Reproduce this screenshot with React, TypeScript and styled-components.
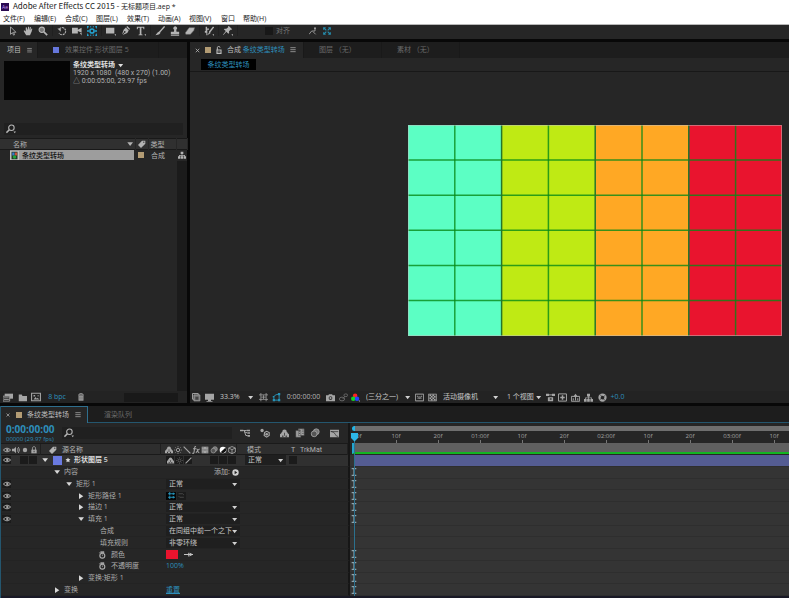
import React from "react";
import styled, { createGlobalStyle, css } from "styled-components";

const blue = "#2d8ebb";

const Global = createGlobalStyle`
  *, *::before, *::after { box-sizing: border-box; }
  html, body { margin: 0; height: 100%; background: #0a0a0a; }
  #root { height: 100vh; }
  body, button, input, select, table {
    font-family: "Open Sans", "Noto Sans CJK SC", sans-serif;
    font-size: 7px;
    line-height: 10px;
    color: #b2b2b2;
  }
  button, input, select { border: 0; margin: 0; padding: 0; background: none; outline: 0; }
  h1, p { margin: 0; font-weight: 400; }
  svg { display: block; flex: none; }
`;

/* ---------- icons ---------- */

const line = { fill: "none", stroke: "currentColor", strokeWidth: 1.3 };

const art: Record<string, React.ReactNode> = {
  arrow: <path d="M3 1v9l2.3-2 1.4 3 1.2-.6L6.6 7.500H9.500z" {...line} strokeWidth={1} />,
  hand: <path d="M3.300 6.500 1.500 5 .800 6l3 5h4.600l2-4.500.8-3.200-1-.3-1.100 2.500.3-4.300H8.300L7.600 5 7.200.8H6L5.800 5 4.400 1.500l-1.100.4z" fill="currentColor" />,
  zoom: <><circle cx="4.500" cy="4.500" r="3.200" fill="#777" stroke="currentColor" strokeWidth="1.300" /><path d="m7 7 4 4" {...line} strokeWidth={2} /></>,
  rotate: <><path d="M3 3.200a4.300 4.300 0 1 1-.6 5.200" {...line} strokeDasharray="2.500 .8" /><path d="M.5 3h4v4z" fill="currentColor" /></>,
  camera: <path d="M0 2h7v2.500L11.500 2v6L7 6v3H0zM9.500 8.500h2v3z" fill="currentColor" />,
  anchor: <><circle cx="6" cy="6" r="2.500" {...line} strokeWidth={1.800} /><path d="M0 3V1h2M4 1h1M7 1h1M10 1h2v2M12 9v2h-2M8 11H7M5 11H4M2 11H0V9M0 6h2.500M9.500 6H12" {...line} strokeWidth={1.800} /></>,
  rect: <path d="M0 2h10v7H0zM10 10h2v2z" fill="currentColor" />,
  pen: <><path d="m7.500 0 3.500 3.500-1.200 1-3.400-3.400zM5.800 1.800l3.500 3.500-1.800 3-5.500 2.400L4.300 8a1 1 0 1 0-.7-.6L1.300 10l1.900-5.500z" fill="currentColor" /></>,
  text: <path d="M1 1h9v3H9L8.500 2h-2v8l1.500.5v.5H3v-.5L4.500 10V2h-2L2 4H1zM10 10h2v2z" fill="currentColor" />,
  brush: <><path d="M11.500.5 5.300 7.500" {...line} strokeWidth={1.600} /><path d="M5 6.500c1 .5 1.500 1.200 1.500 2C5 11 2 11 .5 11c1.500-1.300 2-3.500 4.500-4.500z" fill="currentColor" /></>,
  stamp: <path d="M4.700 7 5 4.500a2.200 2.200 0 1 1 2.500 0L7.800 7H11v3H1V7zM1 10.600h10v1H1z" fill="currentColor" />,
  eraser: <path d="m.5 8 4.500-6h6.500L10.500 5.500l-4 4.500h-5.500z" fill="currentColor" stroke="#777" strokeWidth=".6" />,
  roto: <><path d="m11.500 1-5 6.500" {...line} strokeWidth={1.700} /><path d="M6.500 7 8 8.500 4 11zM2 1h1.700v2H6v1.500H4V11H2.800V8H1V6h1zM10 10h2v2z" fill="currentColor" /></>,
  pin: <path d="m7 0 4 4-1 .6-.8-.2-2 2 .2 2-1 .8L4 6.800.500 10.700 0 10.400 3.300 6 1 4l.8-.8 2.200.1L6.200 1.500 6 .7zM10 10h2v2z" fill="currentColor" />,
  snapA: <><path d="M0 11 4 6h5V2M6 7l4 4" {...line} /><circle cx="9" cy="2" r="1.500" fill="currentColor" /></>,
  snapB: <path d="M1 4V1h3M8 1h3v3M11 8v3H8M4 11H1V8M2 2l3 3M10 2 7 5M2 10l3-3M10 10 7 7" {...line} strokeWidth={1.600} />,
  search: <><circle cx="6.500" cy="4.500" r="3.300" {...line} /><path d="M4 7 .5 10.500" {...line} strokeWidth={1.800} /><path d="M9 9h3l-1.500 2z" fill="currentColor" /></>,
  menu: <path d="M2 2.500h8M2 5.500h8M2 8.500h8" {...line} strokeWidth={1} />,
  close: <path d="m3 3 6 6m0-6L3 9" {...line} />,
  lock: <><path d="M2 5.500h8V11H2z" fill="currentColor" /><path d="M3.700 6V3.200c0-3 4.600-3 4.600 0V6" {...line} /><path d="M5.500 7.200h1.200v2H5.500z" fill="#262626" /></>,
  unlock: <><path d="M3 6h6v5H3z" {...line} strokeWidth={1.700} /><path d="M3.500 6V2.500c0-2.500 4-2.500 4 0" {...line} strokeWidth={1.500} /><path d="M5.500 7.500h1v2h-1z" fill="currentColor" /></>,
  tag: <><path d="M6 1h5v4.500L4.500 12 0 7.500z" fill="currentColor" /><circle cx="8.700" cy="3.300" r=".9" fill="#262626" /></>,
  down: <path d="M2 3.500h8.500L6.200 9z" fill="currentColor" />,
  right: <path d="M3 2v8.500L9.500 6.200z" fill="currentColor" />,
  comp: <><path d="M0 0h12v12H0z" fill="#c0c0c0" /><path d="M2 1h8v10H2z" fill="#203a28" /><path d="M3 2h3v4H3z" fill="#397cd0" /><path d="M6.500 2h3v4h-3z" fill="#c85038" /><circle cx="6" cy="8" r="2.300" fill="#23a33a" /></>,
  flow: <path d="M4 1h4v3.500H4zM0 8h3.500v3.500H0zM4.200 8h3.500v3.500H4.200zM8.500 8H12v3.500H8.500zM5.500 4h1v4h-1zM1.500 6h9v2.500h-1V7h-7v1.500h-1z" fill="currentColor" />,
  interpret: <><path d="M2 2h10v6H2z" fill="currentColor" /><path d="M0 5h8v6H0z" fill="#262626" stroke="currentColor" /><path d="M1 7h6M1 9h6" {...line} strokeWidth={1} /></>,
  folder: <path d="M1 2h4l1 2h6v7H1z" fill="currentColor" />,
  newcomp: <><path d="M.7 1.500h10.600v9H.700z" {...line} /><path d="M3 3.500h2v2H3zM8 3.500h1v2H8zM3 9l2.500-3L7 8l1-1 2 2z" fill="currentColor" /></>,
  trash: <><path d="M1.500 3h9M4 2.500V1h4v1.500" {...line} /><path d="M2.300 4h7.400v7.500H2.300z" fill="currentColor" /><path d="M4.500 5v5M7.500 5v5" stroke="#333" strokeWidth=".8" /></>,
  layers: <><path d="M.7.7h7.600v7.600H.700z" {...line} /><path d="M2.500 2.500h8v8h-8z" fill="#777" stroke="currentColor" /><path d="M4.500 5h4v4h-4z" fill="#444" /></>,
  monitor: <path d="M0 1h12v8H8v1.500h2v1H2v-1h2V9H0z" fill="currentColor" />,
  region: <path d="M0 2.500h12M0 8.500h12M2.500 0v11M9.500 0v11M6 3v5M3 5.500h6" {...line} strokeWidth={1} />,
  mask: <><path d="M2.500 9.500V6q0-4 7-4.500v8z" {...line} /><path d="M1 8h3v3H1zM8 0h3v3H8zM8 8h3v3H8zM1 4h2v2H1z" fill="currentColor" /></>,
  photo: <><path d="M0 3h3l1-1.500h4L9 3h3v8H0z" fill="currentColor" /><circle cx="6" cy="6.700" r="2.500" fill="#333" /><circle cx="6" cy="6.700" r="1.300" fill="currentColor" /></>,
  link: <><ellipse cx="4" cy="8" rx="3.500" ry="2.500" {...line} /><ellipse cx="9" cy="3" rx="2.500" ry="1.800" {...line} /><path d="m5 8 3-4" {...line} /></>,
  rgb: <><circle cx="5.500" cy="3.500" r="3" fill="#f22" /><circle cx="3" cy="7.500" r="3" fill="#17d326" /><circle cx="8" cy="7.500" r="3" fill="#2545ff" /><path d="M10 10h2v2z" fill="currentColor" /></>,
  fast: <><path d="M.5 1.500h11v9H.500z" {...line} /><path d="M3 4h1v1H3zM8 4h1v1H8zM3 7h6M5 5h2v2H5z" {...line} strokeWidth={.8} /></>,
  checker: <><path d="M.5 1.500h11v9H.500z" fill="#444" stroke="currentColor" /><path d="M2 2h2v2H2zM6 2h2v2H6zM4 4h2v2H4zM8 4h2v2H8zM2 6h2v2H2zM6 6h2v2H6zM4 8h2v2H4zM8 8h2v2H8z" fill="currentColor" /></>,
  pixel: <><path d="M0 1h4v3H0zM8 1h4v3H8zM2.500 5.500h7V11h-7z" fill="currentColor" /><path d="M4 2.500h4" {...line} /><path d="M5 7h2.500v2H5z" fill="#333" /></>,
  fastprev: <><path d="M.7 1.200h10.600v9.600H.700z" {...line} /><path d="M6 3v6M3 6h6" {...line} strokeWidth={2} /></>,
  timeline: <><path d="M.5 4.500h11v6.500H.500zM3 7v3M6 5v5M9 7v3" {...line} strokeWidth={1.300} /><path d="M3 5h6L6 1z" fill="currentColor" /></>,
  aperture: <><circle cx="6" cy="6" r="4" fill="none" stroke="currentColor" strokeWidth="3" /><path d="m2 2 3 2M10 2 8 5M10 10 7 8M2 10l2-3" stroke="#333" strokeWidth=".9" /></>,
  miniflow: <><path d="M0 3h4M4 3h4M5 3l2 6h2M5 4.500 9 6" {...line} strokeWidth={1.200} /><path d="M0 2h4v2H0zM8 2h4v2H8zM9 5h3v2H9zM9 8.500h3v2H9z" fill="currentColor" /></>,
  draft: <><circle cx="2.500" cy="3" r="2" fill="currentColor" /><path d="M5.500 5.500 8 4l3 1.500V9l-3 2-3-2z" {...line} strokeWidth={1.400} /><circle cx="8" cy="7.500" r="1.600" fill="currentColor" /></>,
  shy: <><path d="M0 11V7q2-1 2.500-3h7Q10 6 12 7v4z" fill="currentColor" /><circle cx="6" cy="3.800" r="3" fill="currentColor" /><path d="M3 8.500h1.500V11H3zM7.500 8.500H9V11H7.500zM5.500 5h1v4h-1z" fill="#333" /></>,
  film: <><path d="M1 3h6v8H1zM4 1h7v8H4z" fill="currentColor" stroke="#444" strokeWidth=".6" /><path d="M5.500 2v6M9.500 2v6" stroke="#262626" strokeDasharray="1 1" /></>,
  frames: <><path d="M1 1h10v10H1z" fill="currentColor" /><path d="M3 2v8M9 2v8" stroke="#333" strokeDasharray="1.300 1" /><path d="M4.500 5.500h3v1h-3z" fill="#333" /></>,
  blur: <><circle cx="7.500" cy="4.500" r="3.500" fill="#777" stroke="currentColor" /><circle cx="5" cy="7" r="3.500" fill="#555" stroke="currentColor" /></>,
  graph: <><path d="M0 1h12v10H0z" fill="currentColor" /><path d="M1 3.500h10M1 3q5 1 6 4t4 3" stroke="#333" fill="none" /></>,
  eye: <><path d="M.5 6Q6 .5 11.500 6 6 11.500.500 6z" {...line} strokeWidth={1.500} /><circle cx="6.500" cy="6" r="1.800" fill="currentColor" /></>,
  speaker: <><path d="M0 4h3l3-3v10L3 8H0z" fill="currentColor" /><path d="M8 3.500q2 2.500 0 5M9.500 1.500q3.500 4.500 0 9" {...line} /></>,
  dot: <circle cx="6" cy="6" r="3.300" fill="currentColor" />,
  sun: <><circle cx="6" cy="6" r="2.500" {...line} /><path d="M6 0v2M6 10v2M0 6h2M10 6h2M2 2l1 1M9 9l1 1M10 2 9 3M3 9l-1 1" {...line} strokeWidth={1} /></>,
  slash: <path d="m1 1 10 10" {...line} strokeWidth={1.700} />,
  quality: <path d="M1 11 11 1" {...line} strokeWidth={1.800} />,
  fx: <path d="M6 .8Q4.200.3 4 3L3 9.500Q2.500 11.500.500 11M1.500 4H6M6.500 4.500Q8 4 8.500 7t2.500 3M11.500 4.500Q9 5 6 10" {...line} strokeWidth={1.600} />,
  half: <><circle cx="6" cy="6" r="5" fill="#fff" /><path d="M9.500 2.500a5 5 0 0 1-7 7z" fill="#111" /></>,
  cube: <path d="M6 .8 11 3v6l-5 2.500L1 9V3zM1 3l5 2.500L11 3M6 5.500v6" {...line} />,
  star: <path d="m6 1 1.500 3L11 4.500 8.500 7l.7 3.700L6 9l-3.200 1.700L3.500 7 1 4.500 4.500 4z" fill="currentColor" />,
  add: <><circle cx="6" cy="6" r="5.500" fill="#d0d0d0" /><path d="M4.500 3v6L9 6z" fill="#222" /></>,
  watch: <><circle cx="6.500" cy="7" r="3.700" {...line} strokeWidth={1.700} /><path d="M4 1h5v1.500H4zM2 2l1 2" stroke="currentColor" fill="currentColor" /><path d="M6.500 5v2h1" {...line} strokeWidth={1} /></>,
  path: <path d="M0 3h12M0 9h12M3 0v6M3 7v5M9 1v4M9 7v4" {...line} strokeWidth={1.500} />,
  pathOff: <path d="M1 3h7l2 2M10 9H3L1 7" {...line} />,
  dropper: <path d="M0 6h12M6.500 3.500v5M9 4v4" {...line} strokeWidth={1.600} />,
  beam: <path d="M2.500 1h7M2.500 11h7M6 1v10" {...line} strokeWidth={1.800} />,
};

const Icon = ({ name, size = 9 }: { name: string; size?: number }) => (
  <svg width={size} height={size} viewBox="0 0 12 12" aria-hidden="true">{art[name]}</svg>
);

/* ---------- shared parts ---------- */

const Shell = styled.div`
  height: 100%;
  display: grid;
  grid-template-rows: auto auto auto minmax(0, 361fr) minmax(0, 195fr);
  background: #080808;
  overflow: hidden;
`;

const IconButton = styled.button<{ $w?: number; $tone?: string }>`
  width: ${(p) => p.$w ?? 13}px;
  height: 11px;
  flex: none;
  display: flex;
  align-items: center;
  justify-content: center;
  color: ${(p) => p.$tone ?? "#a5a5a5"};
`;

const Swatch = styled.span<{ $c: string; $w?: number; $h?: number }>`
  width: ${(p) => p.$w ?? 6}px;
  height: ${(p) => p.$h ?? 6}px;
  background: ${(p) => p.$c};
  flex: none;
`;

const TabBar = styled.div`
  display: flex;
  height: 16px;
  background: #1d1d1d;
`;

const Tab = styled.button<{ $on?: boolean; $w: number; $pad?: number; $gap?: number }>`
  width: ${(p) => p.$w}px;
  flex: none;
  display: flex;
  align-items: center;
  gap: ${(p) => p.$gap ?? 5}px;
  padding-left: ${(p) => p.$pad ?? 5}px;
  background: ${(p) => (p.$on ? "#262626" : "#1d1d1d")};
  color: ${(p) => (p.$on ? "#bcbcbc" : "#6a6a6a")};
  border-right: 1px solid #191919;
  white-space: nowrap;
`;

const Blue = styled.span`color: ${blue};`;

/* ---------- window header ---------- */

const TitleBar = styled.header`
  display: flex;
  align-items: center;
  gap: 4px;
  height: 13px;
  padding-left: 1px;
  background: #fff;
`;
const Logo = styled.span`
  width: 8px;
  height: 8px;
  background: #2a0a52;
  color: #c79cf2;
  font-size: 5px;
  line-height: 8px;
  text-align: center;
`;
const Title = styled.h1`
  font-family: "Noto Sans CJK SC", sans-serif;
  font-size: 8px;
  line-height: 12px;
  color: #222;
`;
const FileName = styled.span`
  font-family: "Open Sans", "Noto Sans CJK SC", sans-serif;
  font-size: 7px;
`;
const MenuBar = styled.nav`
  display: flex;
  height: 12px;
  padding-left: 3px;
  background: #fff;
  border-bottom: 1px solid #b8b8b8;
`;
const MenuItem = styled.button<{ $w?: number }>`
  width: ${(p) => p.$w ?? 31}px;
  color: #222;
  text-align: left;
  white-space: nowrap;
`;

const Tools = styled.div`
  display: flex;
  align-items: center;
  height: 17px;
  padding: 0 0 3px 5px;
  background: #262626;
  border-bottom: 3px solid #080808;
`;
const ToolGroup = styled.div`
  display: flex;
  padding-right: 2px;
  margin-right: 1px;
  border-right: 1px solid #202020;
`;
const SnapLabel = styled.label`
  display: flex;
  align-items: center;
  gap: 3px;
  margin: 0 16px 0 26px;
  color: #777;
`;
const DarkCheck = styled.input`
  appearance: none;
  width: 8px;
  height: 8px;
  background: #181818;
`;

/* ---------- project panel ---------- */

const Workspace = styled.main`
  display: grid;
  grid-template-columns: 187px minmax(0, 1fr);
  gap: 3px;
  min-height: 0;
`;
const Panel = styled.section`
  display: flex;
  flex-direction: column;
  min-width: 0;
  min-height: 0;
  background: #262626;
`;
const AssetInfo = styled.div`
  display: flex;
  gap: 3px;
  height: 65px;
  padding: 3px 4px;
  font-family: Roboto, "Noto Sans CJK SC", sans-serif;
  line-height: 8px;
  white-space: pre;
`;
const Thumb = styled.div`
  width: 66px;
  height: 39px;
  background: #050505;
`;
const AssetName = styled.p`
  display: flex;
  align-items: center;
  gap: 2px;
  color: #e0e0e0;
  font-weight: 600;
`;
const SearchBox = styled.label<{ $w?: number }>`
  display: flex;
  align-items: center;
  height: 12px;
  ${(p) => (p.$w ? css`width: ${p.$w}px;` : css`margin: 0 4px;`)}
  padding-left: 2px;
  background: #202020;
  color: #b5b5b5;
`;
const SearchInput = styled.input`
  flex: 1;
  min-width: 0;
  height: 10px;
`;
const Assets = styled.table`
  width: 187px;
  margin-top: 3px;
  table-layout: fixed;
  border-collapse: collapse;
  th, td { padding: 0; height: 11px; font-weight: 400; text-align: left; line-height: 9px; }
  thead tr { background: #303030; border-bottom: 1px solid #191919; border-top: 1px solid #191919; }
  th { border-right: 1px solid #262626; }
`;
const Spread = styled.span<{ $pad?: number }>`
  display: flex;
  align-items: center;
  justify-content: space-between;
  padding: 0 1px 0 ${(p) => p.$pad ?? 0}px;
`;
const Picked = styled.span`
  display: flex;
  align-items: center;
  margin: 0 1px 0 10px;
  gap: 3px;
  height: 10px;
  background: #9d9d9d;
  color: #101010;
  font-weight: 500;
`;
const ScrollLane = styled.div`
  flex: 1;
  align-self: flex-end;
  width: 10px;
  background: #1b1b1b;
`;
const PanelFoot = styled.footer`
  display: flex;
  align-items: center;
  height: 12px;
  background: #232323;
  white-space: nowrap;
`;
const FootScroll = styled.span`
  height: 9px;
  width: 54px;
  margin-left: 34px;
  background: #191919;
`;
const Depth = styled.button`
  width: 28px;
  color: ${blue};
`;

/* ---------- composition panel ---------- */

const Crumbs = styled.nav`
  height: 14px;
  padding: 1px 11px;
  border-bottom: 1px solid #181818;
`;
const Crumb = styled.button`
  width: 55px;
  height: 11px;
  background: #000;
  color: ${blue};
`;
const Viewer = styled.div`
  flex: 1;
  min-height: 0;
  padding: 53px 7px 0 218px;
  svg { width: 100%; }
`;
const PickWrap = styled.label<{ $w: number }>`
  position: relative;
  display: block;
  width: ${(p) => p.$w}px;
  flex: none;
  height: 10px;
  color: #d0d0d0;
  svg { position: absolute; right: 2px; top: 2px; pointer-events: none; }
`;
const Pick = styled.select<{ $boxed?: boolean }>`
  appearance: none;
  display: block;
  width: 100%;
  height: 10px;
  line-height: 10px;
  padding-left: ${(p) => (p.$boxed ? 3 : 1)}px;
  padding-right: 7px;
  background: ${(p) => (p.$boxed ? "#1f1f1f" : "transparent")};
  color: #c8c8c8;
`;
const Timecode = styled.button<{ $w: number; $c?: string }>`
  width: ${(p) => p.$w}px;
  color: ${(p) => p.$c ?? "#b2b2b2"};
`;

const Dropdown = ({ value, w, label, boxed }: { value: string; w: number; label: string; boxed?: boolean }) => (
  <PickWrap $w={w}>
    <Pick $boxed={boxed} aria-label={label} defaultValue={value}><option>{value}</option></Pick>
    <Icon name="down" size={7} />
  </PickWrap>
);

/* ---------- timeline ---------- */

const TimelinePanel = styled(Panel)`
  margin-top: 3px;
  border-left: 1px solid #24566e;
  background: #262626;
`;
const TimelineTabs = styled(TabBar)`
  height: 17px;
  border-bottom: 1px solid #24566e;
`;
const TimelineTab = styled(Tab)`
  height: ${(p) => (p.$on ? 17 : 16)}px;
  border-top: 1px solid ${(p) => (p.$on ? "#2f6f8e" : "transparent")};
  border-right: 1px solid ${(p) => (p.$on ? "#2f6f8e" : "transparent")};
`;
const Split = styled.div`
  display: grid;
  grid-template-columns: 349px minmax(0, 1fr);
  min-height: 0;
`;
const Controls = styled.div`
  display: flex;
  align-items: center;
  height: 20px;
  padding-left: 5px;
  border-right: 2px solid #161616;
`;
const Clock = styled.div`
  width: 56px;
  color: ${blue};
  white-space: nowrap;
`;
const BigTime = styled.button`
  display: block;
  font-size: 10px;
  font-weight: 700;
  line-height: 11px;
  color: ${blue};
`;
const Small = styled.span`
  display: block;
  font-size: 6px;
  line-height: 8px;
`;
const RulerArea = styled.div`
  overflow: hidden;
  padding: 3px 0 0 2px;
`;
const WorkBar = styled.div`
  height: 5px;
  background: #6f6f6f;
  border-left: 3px solid #24b5e6;
  border-radius: 3px 0 0 3px;
`;
const Ruler = styled.div`
  display: flex;
  line-height: 8px;
  font-size: 6px;
  color: #a5a5a5;
`;
const Tick = styled.span<{ $first?: boolean }>`
  width: ${(p) => (p.$first ? 23 : 42)}px;
  height: 12px;
  flex: none;
  display: flex;
  flex-direction: column;
  align-items: ${(p) => (p.$first ? "flex-start" : "center")};
  padding: 1px 0 0 ${(p) => (p.$first ? 4 : 0)}px;
  &::after {
    content: "";
    width: 1px;
    height: 3px;
    background: ${(p) => (p.$first ? "transparent" : "#777")};
  }
`;
const Headings = styled.div`
  display: grid;
  grid-template-columns: 40px 120px 76px 1fr;
  align-items: center;
  height: 12px;
  background: #2e2e2e;
  border-right: 2px solid #161616;
  border-top: 1px solid #1a1a1a;
  border-bottom: 1px solid #1a1a1a;
`;
const Cells = styled.div<{ $pad?: number }>`
  display: flex;
  align-items: center;
  height: 100%;
  min-width: 0;
  padding-left: ${(p) => p.$pad ?? 0}px;
  border-right: 1px solid #202020;
  white-space: nowrap;
`;
const ModeText = styled.span<{ $w: number }>`
  width: ${(p) => p.$w}px;
  padding-left: 5px;
  font-family: Roboto, "Noto Sans CJK SC", sans-serif;
`;
const WorkArea = styled.div`
  height: 11px;
  margin-left: 2px;
  background: #606060;
  border-left: 3px solid #24a5cf;
  border-bottom: 2px solid #12b521;
`;
const Rows = styled.div`
  position: relative;
  flex: 1;
  min-height: 0;
  display: grid;
  grid-auto-rows: minmax(0, 1fr);
`;
const Outline = styled.div<{ $layer?: boolean }>`
  display: grid;
  grid-template-columns: 40px 125px 1fr;
  min-height: 0;
  align-items: center;
  background: ${(p) => (p.$layer ? "#303030" : "#262626")};
  border-right: 2px solid #161616;
  border-bottom: 1px solid #232323;
`;
const Features = styled.div`
  display: flex;
  gap: 1px;
  padding-left: 1px;
`;
const Box = styled.span<{ $w?: number; $bg?: string; $tone?: string }>`
  display: flex;
  align-items: center;
  justify-content: center;
  width: ${(p) => p.$w ?? 8}px;
  height: 8px;
  background: ${(p) => p.$bg ?? "#1b1b1b"};
  color: ${(p) => p.$tone ?? "#a5a5a5"};
`;
const NameCell = styled.div<{ $depth: number; $strong?: boolean }>`
  display: flex;
  align-items: center;
  gap: ${(p) => (p.$strong ? 3 : 2)}px;
  padding-left: ${(p) => p.$depth * 12}px;
  color: ${(p) => (p.$strong ? "#d8d8d8" : "#adadad")};
  font-weight: ${(p) => (p.$strong ? 600 : 400)};
  white-space: nowrap;
`;
const Twirl = styled.button<{ $hidden?: boolean }>`
  width: 9px;
  height: 8px;
  visibility: ${(p) => (p.$hidden ? "hidden" : "visible")};
  color: #d8d8d8;
`;
const Value = styled.div`
  display: flex;
  align-items: center;
  gap: 1px;
  white-space: nowrap;
`;
const Link = styled.a<{ $line?: boolean }>`
  color: ${blue};
  text-decoration: ${(p) => (p.$line ? "underline" : "none")};
`;
const AddLabel = styled.button`
  display: flex;
  align-items: center;
  gap: 2px;
  margin-left: 48px;
`;
const Gap = styled.span<{ $w: number }>`
  width: ${(p) => p.$w}px;
  flex: none;
`;
const Track = styled.div`
  display: flex;
  align-items: center;
  min-height: 0;
  color: #8aa3ad;
  background: #343434;
  border-bottom: 1px solid #2e2e2e;
`;
const LayerBar = styled.div`
  flex: 1;
  height: 100%;
  margin-left: 4px;
  background: #545c92;
`;
const Playhead = styled.div`
  position: absolute;
  left: 353px;
  top: -22px;
  bottom: 0;
  width: 1px;
  background: #2c718e;
  pointer-events: none;
  svg { position: absolute; left: -4px; top: 0; }
`;
const NextLayer = styled.div`
  height: 2px;
  flex: none;
  background: #191926;
`;

type RowData = {
  name: string; depth: number; eye?: boolean; open?: boolean; leaf?: boolean; watch?: boolean;
  beam?: boolean; value?: React.ReactNode;
};

const mode = (value: string, label: string) => <Dropdown boxed w={74} value={value} label={label} />;

const rows: RowData[] = [
  { name: "内容", depth: 1, open: true, beam: true, value: <AddLabel>添加:<Icon name="add" size={7} /></AddLabel> },
  { name: "矩形 1", depth: 2, eye: true, open: true, beam: true, value: mode("正常", "矩形模式") },
  {
    name: "矩形路径 1", depth: 3, eye: true, beam: true,
    value: <><Box $w={10} $bg="#050505" $tone="#29a5d0"><Icon name="path" size={7} /></Box><Box $w={9} $tone="#555"><Icon name="pathOff" size={7} /></Box></>,
  },
  { name: "描边 1", depth: 3, eye: true, beam: true, value: mode("正常", "描边模式") },
  { name: "填充 1", depth: 3, eye: true, open: true, beam: true, value: mode("正常", "填充模式") },
  { name: "合成", depth: 4, leaf: true, value: mode("在同组中前一个之下", "合成") },
  { name: "填充规则", depth: 4, leaf: true, value: mode("非零环绕", "填充规则") },
  {
    name: "颜色", depth: 4, leaf: true, watch: true, beam: true,
    value: <><Swatch $c="#e9142e" $w={12} $h={9} /><IconButton $w={18} $tone="#c5c5c5" aria-label="吸管"><Icon name="dropper" /></IconButton></>,
  },
  { name: "不透明度", depth: 4, leaf: true, watch: true, beam: true, value: <Link href="#opacity">100%</Link> },
  { name: "变换:矩形 1", depth: 3, beam: true },
  { name: "变换", depth: 1, beam: true, value: <Link href="#reset" $line>重置</Link> },
];

const menus: [string, number][] = [
  ["文件(F)", 31], ["编辑(E)", 31], ["合成(C)", 31], ["图层(L)", 31], ["效果(T)", 31],
  ["动画(A)", 31], ["视图(V)", 32], ["窗口", 22], ["帮助(H)", 31],
];

const toolGroups = [
  ["arrow", "hand", "zoom"], ["rotate", "camera", "anchor"], ["rect", "pen", "text"],
  ["brush", "stamp", "eraser"], ["roto"], ["pin"],
];

const stripes = ["#5cffc4", "#bfea14", "#ffa824", "#e9142e"];
const ticks = ["10f", "20f", "01:00f", "10f", "20f", "02:00f", "10f", "20f", "03:00f", "10f"];
const switches = ["shy", "sun", "slash", "fx", "frames", "blur", "half", "cube"];

const Artwork = () => (
  <svg viewBox="0 0 374 211" role="img" aria-label="条纹类型转场">
    {stripes.map((c, i) => <rect key={c} x={i * 93.500} y="0" width="93.500" height="211" fill={c} />)}
    <g stroke="#078a16" strokeWidth="1.500" strokeOpacity=".8">
      {[1, 3, 5, 7].map((i) => <path key={i} d={`M${i * 46.800} 0V211`} />)}
      {[1, 2, 3, 4, 5].map((i) => <path key={i} d={`M0 ${i * 35.100}H374`} />)}
    </g>
    <g stroke="#24762c" strokeWidth="1.500">
      {[2, 4, 6].map((i) => <path key={i} d={`M${i * 46.800} 0V211`} />)}
    </g>
    <rect x=".5" y=".5" width="373" height="210" fill="none" stroke="#c0c0c0" strokeOpacity=".5" />
  </svg>
);

const ProjectPanel = () => (
  <Panel>
    <TabBar>
      <Tab $on $w={38} $pad={7}>项目<Icon name="menu" size={7} /></Tab>
      <Tab $w={121} $pad={15} $gap={6}><Swatch $c="#6677dc" />效果控件 形状图层 5</Tab>
    </TabBar>
    <AssetInfo>
      <Thumb />
      <div>
        <AssetName>条纹类型转场<Icon name="down" size={7} /></AssetName>
        <p>1920 x 1080  (480 x 270) (1.00)</p>
        <p>△ 0:00:05:00, 29.97 fps</p>
      </div>
    </AssetInfo>
    <SearchBox><Icon name="search" size={10} /><SearchInput aria-label="搜索项目" /></SearchBox>
    <Assets>
      <colgroup><col width="135" /><col width="13" /><col width="28" /><col width="11" /></colgroup>
      <thead>
        <tr>
          <th><Spread $pad={13}>名称<Icon name="down" size={8} /></Spread></th>
          <th><Spread $pad={2}><Icon name="tag" size={8} /></Spread></th>
          <th><Spread $pad={2}>类型</Spread></th>
          <th />
        </tr>
      </thead>
      <tbody>
        <tr>
          <td><Picked><Icon name="comp" size={9} />条纹类型转场</Picked></td>
          <td><Spread $pad={3}><Swatch $c="#b39c74" /></Spread></td>
          <td><Spread $pad={3}>合成</Spread></td>
          <td><Spread $pad={2}><Icon name="flow" size={8} /></Spread></td>
        </tr>
      </tbody>
    </Assets>
    <ScrollLane />
    <PanelFoot>
      <IconButton $w={15} aria-label="解释素材"><Icon name="interpret" size={10} /></IconButton>
      <IconButton $w={14} aria-label="新建文件夹"><Icon name="folder" /></IconButton>
      <IconButton $w={14} aria-label="新建合成"><Icon name="newcomp" size={10} /></IconButton>
      <Depth>8 bpc</Depth>
      <IconButton $w={19} aria-label="删除"><Icon name="trash" size={8} /></IconButton>
      <FootScroll />
    </PanelFoot>
  </Panel>
);

const CompPanel = () => (
  <Panel>
    <TabBar>
      <Tab $on $w={114} $pad={4} $gap={4}>
        <Icon name="close" size={7} /><Swatch $c="#b39c74" /><Icon name="unlock" size={8} />
        <span>合成 <Blue>条纹类型转场</Blue></span><Icon name="menu" size={8} />
      </Tab>
      <Tab $w={78} $pad={15}>图层 （无）</Tab>
      <Tab $w={78} $pad={15}>素材 （无）</Tab>
    </TabBar>
    <Crumbs><Crumb>条纹类型转场</Crumb></Crumbs>
    <Viewer><Artwork /></Viewer>
    <PanelFoot>
      <IconButton aria-label="始终预览"><Icon name="layers" /></IconButton>
      <IconButton aria-label="主查看器"><Icon name="monitor" /></IconButton>
      <Gap $w={3} />
      <Dropdown w={37} value="33.3%" label="放大率" />
      <IconButton $w={14} aria-label="网格"><Icon name="region" /></IconButton>
      <IconButton $tone="#2792b6" aria-label="蒙版"><Icon name="mask" /></IconButton>
      <Timecode $w={41}>0:00:00:00</Timecode>
      <IconButton aria-label="快照"><Icon name="photo" /></IconButton>
      <IconButton $w={12} $tone="#666" aria-label="显示快照"><Icon name="link" /></IconButton>
      <IconButton aria-label="通道"><Icon name="rgb" /></IconButton>
      <Gap $w={3} />
      <Dropdown w={48} value="(三分之一)" label="分辨率" />
      <IconButton aria-label="目标区域"><Icon name="fast" /></IconButton>
      <IconButton aria-label="透明网格"><Icon name="checker" /></IconButton>
      <Gap $w={3} />
      <Dropdown w={59} value="活动摄像机" label="视图" />
      <Gap $w={5} />
      <Dropdown w={38} value="1 个视图" label="视图布局" />
      <IconButton $w={12} aria-label="像素长宽比"><Icon name="pixel" /></IconButton>
      <IconButton aria-label="快速预览"><Icon name="fastprev" /></IconButton>
      <IconButton aria-label="时间轴"><Icon name="timeline" /></IconButton>
      <IconButton aria-label="流程图"><Icon name="flow" /></IconButton>
      <IconButton $w={15} aria-label="曝光度"><Icon name="aperture" /></IconButton>
      <Timecode $w={15} $c={blue}>+0.0</Timecode>
    </PanelFoot>
  </Panel>
);

const Timeline = () => (
  <TimelinePanel>
    <TimelineTabs>
      <TimelineTab $on $w={87} $pad={4}>
        <Icon name="close" size={6} /><Swatch $c="#b39c74" />条纹类型转场<Icon name="menu" size={8} />
      </TimelineTab>
      <TimelineTab $w={80} $pad={16}>渲染队列</TimelineTab>
    </TimelineTabs>
    <Split>
      <Controls>
        <Clock><BigTime>0:00:00:00</BigTime><Small>00000 (29.97 fps)</Small></Clock>
        <SearchBox $w={170}><Icon name="search" size={10} /><SearchInput aria-label="搜索图层" /></SearchBox>
        <Gap $w={6} />
        <IconButton aria-label="微型流程图"><Icon name="miniflow" size={10} /></IconButton>
        <Gap $w={7} />
        <IconButton aria-label="草图 3D"><Icon name="draft" size={10} /></IconButton>
        <Gap $w={7} />
        <IconButton aria-label="隐藏图层"><Icon name="shy" /></IconButton>
        <Gap $w={2} />
        <IconButton aria-label="帧混合"><Icon name="film" size={10} /></IconButton>
        <Gap $w={2} />
        <IconButton aria-label="运动模糊"><Icon name="blur" size={10} /></IconButton>
        <Gap $w={7} />
        <IconButton aria-label="图表编辑器"><Icon name="graph" /></IconButton>
      </Controls>
      <RulerArea>
        <WorkBar />
        <Ruler>
          <Tick $first>0f</Tick>
          {ticks.map((t, i) => <Tick key={i}>{t}</Tick>)}
        </Ruler>
      </RulerArea>
    </Split>
    <Split>
      <Headings>
        <Cells $pad={1}>
          {["eye", "speaker", "dot", "lock"].map((n) => <IconButton key={n} $w={9} aria-label={n}><Icon name={n} size={8} /></IconButton>)}
        </Cells>
        <Cells $pad={8}><Icon name="tag" size={8} /><Gap $w={5} />源名称</Cells>
        <Cells $pad={3}>
          {switches.map((n) => <IconButton key={n} $w={9} aria-label={n}><Icon name={n} size={8} /></IconButton>)}
        </Cells>
        <Cells $pad={5}><ModeText $w={44}>模式</ModeText><ModeText $w={9}>T</ModeText><ModeText $w={42}>TrkMat</ModeText></Cells>
      </Headings>
      <WorkArea />
    </Split>
    <Rows>
      <Split>
        <Outline $layer>
          <Features>
            <Box $w={9}><Icon name="eye" size={8} /></Box><Gap $w={7} />
            <Box /><Box />
          </Features>
          <NameCell $depth={0} $strong>
            <Twirl aria-label="折叠图层"><Icon name="down" size={8} /></Twirl>
            <Swatch $c="#6a7ae0" $w={9} $h={9} />
            <Icon name="star" size={6} />
            <span>形状图层 5</span>
          </NameCell>
          <Value>
            <Box><Icon name="shy" size={7} /></Box>
            <Box $tone="#666"><Icon name="sun" size={7} /></Box>
            <Box><Icon name="quality" size={7} /></Box>
            <Gap $w={16} /><Box /><Box /><Box /><Gap $w={7} />
            <Dropdown boxed w={41} value="正常" label="图层模式" />
            <Gap $w={1} /><Box />
          </Value>
        </Outline>
        <Track><LayerBar /></Track>
      </Split>
      {rows.map((r) => (
        <Split key={r.name}>
          <Outline>
            <Features>{r.eye && <Box $w={9}><Icon name="eye" size={8} /></Box>}</Features>
            <NameCell $depth={r.depth}>
              {r.watch ? (
                <><Gap $w={7} /><Icon name="watch" size={8} /><Gap $w={1} /></>
              ) : (
                <Twirl $hidden={r.leaf} aria-label={r.name}><Icon name={r.open ? "down" : "right"} size={8} /></Twirl>
              )}
              <span>{r.name}</span>
            </NameCell>
            <Value>{r.value}</Value>
          </Outline>
          <Track>{r.beam && <Icon name="beam" size={8} />}</Track>
        </Split>
      ))}
      <Playhead>
        <svg width="9" height="9" viewBox="0 0 9 9"><path d="M1 0h7v5L4.500 8.500 1 5z" fill="#2db7e8" /></svg>
      </Playhead>
    </Rows>
    <NextLayer />
  </TimelinePanel>
);

export default function App() {
  return (
    <Shell>
      <Global />
      <TitleBar><Logo>Ae</Logo><Title>Adobe After Effects CC 2015 - <FileName>无标题项目.aep *</FileName></Title></TitleBar>
      <MenuBar>{menus.map(([m, w]) => <MenuItem key={m} $w={w}>{m}</MenuItem>)}</MenuBar>
      <Tools>
        {toolGroups.map((g) => (
          <ToolGroup key={g[0]}>
            {g.map((t) => (
              <IconButton key={t} $w={15} $tone={t === "anchor" ? "#23a6d5" : "#b5b5b5"} aria-label={t}><Icon name={t} size={10} /></IconButton>
            ))}
          </ToolGroup>
        ))}
        <SnapLabel><DarkCheck type="checkbox" />对齐</SnapLabel>
        <IconButton $w={14} aria-label="对齐选项"><Icon name="snapA" size={8} /></IconButton>
        <IconButton $w={14} $tone="#258fb0" aria-label="对齐边缘"><Icon name="snapB" size={8} /></IconButton>
      </Tools>
      <Workspace><ProjectPanel /><CompPanel /></Workspace>
      <Timeline />
    </Shell>
  );
}
